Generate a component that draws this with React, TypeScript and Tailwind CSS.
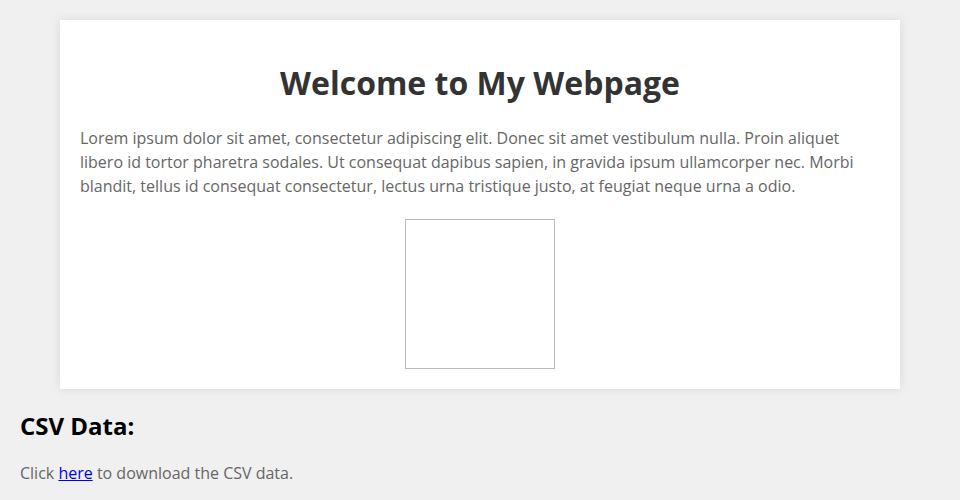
export default function App() {
  return (
    <div className="min-h-[500px] bg-[#f0f0f0] p-5 font-['Open_Sans',sans-serif] text-black">
      {/* Main card */}
      <div className="mx-auto max-w-[840px] bg-white p-5 shadow-[0_0_10px_rgba(0,0,0,0.1)]">
        <h1 className="my-[21.4px] text-center text-[32px] font-bold leading-[1.362] text-[#333]">
          Welcome to My Webpage
        </h1>
        <p className="text-base leading-6 text-[#666]">
          Lorem ipsum dolor sit amet, consectetur adipiscing elit. Donec sit amet vestibulum nulla. Proin aliquet
          libero id tortor pharetra sodales. Ut consequat dapibus sapien, in gravida ipsum ullamcorper nec. Morbi
          blandit, tellus id consequat consectetur, lectus urna tristique justo, at feugiat neque urna a odio.
        </p>
        <div className="mx-auto mt-[21px] h-[150px] w-[150px] border border-[#bbb] bg-white" />
      </div>

      {/* CSV section */}
      <h2 className="mt-[21px] text-2xl font-bold leading-[1.362]">CSV Data:</h2>
      <p className="mt-[18px] text-base leading-6 text-[#666]">
        Click{" "}
        <a href="#" className="text-[#0000ee] underline">
          here
        </a>{" "}
        to download the CSV data.
      </p>
    </div>
  );
}
